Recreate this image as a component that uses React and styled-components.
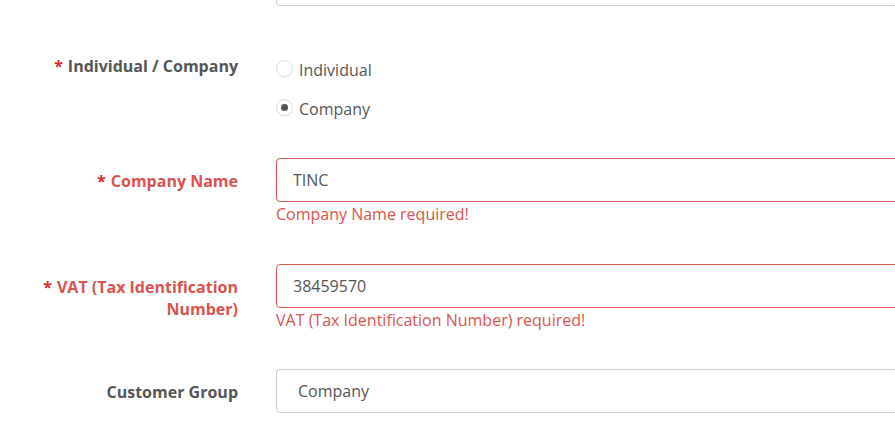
import React from "react";
import styled, { createGlobalStyle } from "styled-components";

const GlobalStyle = createGlobalStyle`
  html, body {
    margin: 0;
    padding: 0;
    background: #fff;
    overflow: hidden;
  }
  body {
    font-family: "Open Sans", "Noto Sans", sans-serif;
    font-size: 16px;
    color: #555;
  }
`;

const Form = styled.form`
  display: flex;
  flex-direction: column;
  width: 895px;
  overflow: hidden;
`;

const Row = styled.div`
  display: grid;
  grid-template-columns: 238px 700px;
  column-gap: 38px;
  margin-bottom: ${props => props.$gap || 0}px;
`;

// the previous field, scrolled mostly out of view
const CroppedField = styled.div`
  height: 6px;
  overflow: hidden;
  display: flex;
  flex-direction: column;
  justify-content: flex-end;
`;

const Label = styled.label`
  text-align: right;
  font-weight: 700;
  line-height: 22px;
  padding-top: 12px;
  color: ${props => (props.$error ? "#d9534f" : "#555")};
`;

const Star = styled.span`
  color: #e3262b;
  margin-right: 5px;
`;

const Field = styled.div`
  display: flex;
  flex-direction: column;
`;

const Input = styled.input`
  box-sizing: border-box;
  flex-shrink: 0;
  width: 100%;
  height: 44px;
  padding: 0 16px;
  border: 1px solid ${props => (props.$error ? "#d9534f" : "#ccc")};
  border-radius: 4px;
  font-family: inherit;
  font-size: 16px;
  color: #555;
  background: #fff;
  outline: none;
`;

const Select = styled.select`
  box-sizing: border-box;
  width: 100%;
  height: 44px;
  padding: 0 21px;
  border: 1px solid #ccc;
  border-radius: 4px;
  font-family: inherit;
  font-size: 16px;
  color: #555;
  background: #fff;
  appearance: none;
  outline: none;
`;

const ErrorText = styled.div`
  margin-top: 1px;
  line-height: 22px;
  color: #d9534f;
`;

const RadioList = styled.div`
  display: flex;
  flex-direction: column;
`;

const RadioItem = styled.label`
  display: flex;
  align-items: center;
  height: 39px;
  padding-top: 15px;
  box-sizing: border-box;
  line-height: 22px;
  color: #555;
`;

const RadioCircle = styled.span`
  box-sizing: border-box;
  width: 17px;
  height: 17px;
  border-radius: 50%;
  border: 1px solid #dcdcdc;
  box-shadow: 0 1px 1px rgba(0, 0, 0, 0.06);
  margin-right: 6px;
  margin-top: -4px;
  display: flex;
  align-items: center;
  justify-content: center;
  &::after {
    content: "";
    display: ${props => (props.$checked ? "block" : "none")};
    width: 7px;
    height: 7px;
    border-radius: 50%;
    background: #555;
  }
`;

const App = () => (
  <>
    <GlobalStyle />
    <Form onSubmit={e => e.preventDefault()}>
      <Row $gap={37}>
        <div />
        <CroppedField>
          <Input readOnly value="" />
        </CroppedField>
      </Row>

      <Row $gap={37}>
        <Label>
          <Star>*</Star>Individual / Company
        </Label>
        <RadioList>
          <RadioItem>
            <RadioCircle />
            Individual
          </RadioItem>
          <RadioItem>
            <RadioCircle $checked />
            Company
          </RadioItem>
        </RadioList>
      </Row>

      <Row $gap={39}>
        <Label $error>
          <Star>*</Star>Company Name
        </Label>
        <Field>
          <Input $error readOnly value="TINC" />
          <ErrorText>Company Name required!</ErrorText>
        </Field>
      </Row>

      <Row $gap={38}>
        <Label $error>
          <Star>*</Star>VAT (Tax Identification Number)
        </Label>
        <Field>
          <Input $error readOnly value="38459570" />
          <ErrorText>VAT (Tax Identification Number) required!</ErrorText>
        </Field>
      </Row>

      <Row>
        <Label>Customer Group</Label>
        <Select defaultValue="company">
          <option value="company">Company</option>
          <option value="individual">Individual</option>
        </Select>
      </Row>
    </Form>
  </>
);

export default App;
